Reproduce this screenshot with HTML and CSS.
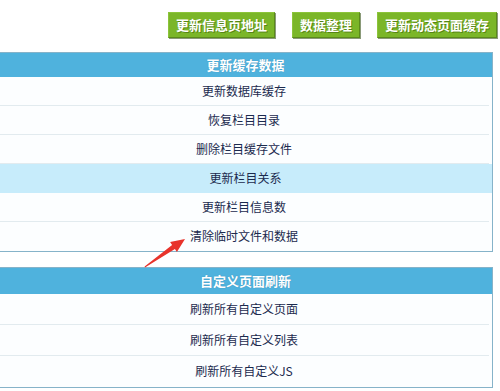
FILE: index.html
```html
<!DOCTYPE html>
<html lang="zh-CN">
<head>
<meta charset="utf-8">
<title>更新缓存</title>
<link rel="stylesheet" href="styles.css">
</head>
<body>
<div class="page">
  <div class="toolbar">
    <a class="btn">更新信息页地址</a>
    <a class="btn">数据整理</a>
    <a class="btn">更新动态页面缓存</a>
  </div>

  <div class="panel panel-cache">
    <div class="panel-head">更新缓存数据</div>
    <div class="row">更新数据库缓存</div>
    <div class="row">恢复栏目目录</div>
    <div class="row">删除栏目缓存文件</div>
    <div class="row row-active">更新栏目关系</div>
    <div class="row">更新栏目信息数</div>
    <div class="row row-last">清除临时文件和数据</div>
  </div>

  <div class="panel panel-custom">
    <div class="panel-head">自定义页面刷新</div>
    <div class="row">刷新所有自定义页面</div>
    <div class="row">刷新所有自定义列表</div>
    <div class="row row-last">刷新所有自定义JS</div>
  </div>

  <svg class="arrow" width="500" height="391" viewBox="0 0 500 391" aria-hidden="true">
    <polygon points="145,267.5 144.6,266.6 172.1,244.9 170.1,242.1 185,239 176.9,251.9 174.9,249.1" fill="#e8332b"/>
  </svg>
</div>
</body>
</html>
```

FILE: styles.css
```css
* { box-sizing: border-box; }

html, body {
  margin: 0;
  padding: 0;
  background: #ffffff;
}

body {
  font-family: "Noto Sans CJK SC", "Noto Sans", sans-serif;
  font-size: 12px;
  color: #1b2a4e;
  overflow: hidden;
}

.page {
  position: relative;
  width: 500px;
  height: 391px;
}

.toolbar {
  display: flex;
  justify-content: flex-end;
  align-items: flex-start;
  gap: 17px;
  height: 52px;
  padding: 12px 3px 0 0;
}

.btn {
  display: block;
  height: 26px;
  line-height: 24px;
  padding: 0 7px;
  background: #7bb628;
  border: 1px solid #8cc43a;
  border-right-color: #5b8a1b;
  border-bottom-color: #5b8a1b;
  box-shadow: 1px 1px 0 #8a9a78;
  color: #ffffff;
  font-size: 13px;
  font-weight: bold;
  text-shadow: 1px 1px 0 rgba(40, 70, 0, 0.45);
  white-space: nowrap;
}

.panel {
  width: 495px;
  margin-left: -2px;
  border: 1px solid #86b3c9;
  background: #fcfeff;
}

.panel-custom {
  margin-top: 15px;
}

.panel-head {
  height: 24px;
  line-height: 24px;
  text-align: center;
  background: #4fb2dd;
  color: #ffffff;
  font-size: 13px;
  font-weight: bold;
  text-shadow: 0 0 1px rgba(0, 60, 100, 0.35);
}

.panel-custom .panel-head {
  height: 26px;
  line-height: 26px;
}

.row {
  height: 29px;
  line-height: 28px;
  text-align: center;
  border-bottom: 1px solid #e2ebef;
  margin-right: 3px;
  background: #fcfeff;
}

.panel-cache .row:first-of-type { height: 30px; line-height: 29px; }

.panel-custom .row {
  height: 31px;
  line-height: 30px;
}

.row-active {
  background: #c7ecfb;
  margin-right: 0;
  border-bottom-color: #c7ecfb;
}

.row-last {
  border-bottom: none;
}

.arrow {
  position: absolute;
  left: 0;
  top: 0;
  pointer-events: none;
}
```
